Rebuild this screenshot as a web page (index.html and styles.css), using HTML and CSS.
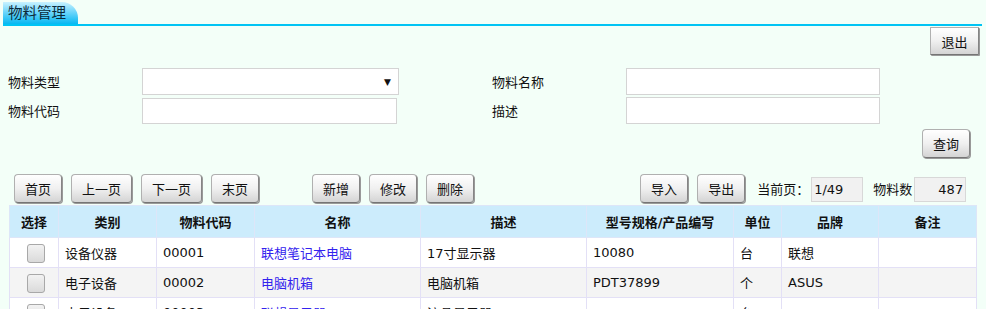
FILE: index.html
```html
<!DOCTYPE html>
<html lang="zh-CN">
<head>
<meta charset="utf-8">
<title>物料管理</title>
<link rel="stylesheet" href="styles.css">
</head>
<body>
<div class="tabbar"><div class="tab">物料管理</div></div>
<div class="topbar"><button class="btn btn-sq">退出</button></div>
<div class="form">
  <label class="lbl">物料类型</label>
  <div class="select w1"><span class="arrow">▼</span></div>
  <label class="lbl lbl2">物料名称</label>
  <input class="txt w2" type="text">
  <label class="lbl">物料代码</label>
  <input class="txt w3" type="text">
  <label class="lbl lbl2">描述</label>
  <input class="txt w2" type="text">
</div>
<div class="qrow"><button class="btn">查询</button></div>
<div class="toolbar">
  <div class="grp">
    <button class="btn">首页</button>
    <button class="btn">上一页</button>
    <button class="btn">下一页</button>
    <button class="btn">末页</button>
  </div>
  <div class="grp g2">
    <button class="btn">新增</button>
    <button class="btn">修改</button>
    <button class="btn">删除</button>
  </div>
  <div class="grp g3">
    <button class="btn">导入</button>
    <button class="btn">导出</button>
    <span class="info">当前页：</span><input class="ro" type="text" value="1/49" readonly>
    <span class="info i2">物料数</span><input class="ro num" type="text" value="487" readonly>
  </div>
</div>
<table class="grid">
  <colgroup>
    <col class="c1"><col class="c2"><col class="c3"><col class="c4"><col class="c5"><col class="c6"><col class="c7"><col class="c8"><col class="c9">
  </colgroup>
  <thead>
    <tr><th>选择</th><th>类别</th><th>物料代码</th><th>名称</th><th>描述</th><th>型号规格/产品编写</th><th>单位</th><th>品牌</th><th>备注</th></tr>
  </thead>
  <tbody>
    <tr><td class="ck"><input type="checkbox" class="cb"></td><td>设备仪器</td><td>00001</td><td><a class="lnk" href="#">联想笔记本电脑</a></td><td>17寸显示器</td><td>10080</td><td>台</td><td>联想</td><td></td></tr>
    <tr class="alt"><td class="ck"><input type="checkbox" class="cb"></td><td>电子设备</td><td>00002</td><td><a class="lnk" href="#">电脑机箱</a></td><td>电脑机箱</td><td>PDT37899</td><td>个</td><td>ASUS</td><td></td></tr>
    <tr><td class="ck"><input type="checkbox" class="cb"></td><td>电子设备</td><td>00003</td><td><a class="lnk" href="#">联想显示器</a></td><td>液晶显示器</td><td></td><td>台</td><td></td><td></td></tr>
  </tbody>
</table>
</body>
</html>
```
FILE: styles.css
```css
html, body {
  margin: 0;
  padding: 0;
  background: #f3fff8;
  font-family: "DejaVu Sans", "Noto Sans CJK SC", sans-serif;
  font-size: 13px;
  color: #111;
  overflow: hidden;
}

.tabbar {
  margin: 0 4px 0 3px;
  padding-top: 2px;
  border-bottom: 2px solid #00c4f4;
  display: flex;
}

.tab {
  width: 70px;
  height: 22px;
  padding-left: 5px;
  line-height: 22px;
  font-size: 14.5px;
  color: #0b2a3a;
  border-top-right-radius: 16px;
  background: linear-gradient(to bottom, #c9f2ff 0%, #6fd6fb 45%, #08b8f2 100%);
}

.topbar {
  display: flex;
  justify-content: flex-end;
  padding: 1px 7px 0 0;
}

.btn {
  font-family: inherit;
  font-size: 13px;
  color: #111;
  height: 29px;
  padding: 0 10px;
  border: 1px solid #b0b0b0;
  border-right-color: #858585;
  border-bottom-color: #757575;
  border-radius: 4px;
  background: linear-gradient(to bottom, #ffffff 0%, #f0f0f0 50%, #d4d4d4 100%);
  box-shadow: 1px 1px 0 #999;
  cursor: pointer;
}

.btn-sq {
  height: 28px;
  width: 49px;
  border-radius: 1px;
}

.form {
  display: grid;
  grid-template-columns: 134px 350px 134px 254px;
  grid-template-rows: 27px 27px;
  row-gap: 2px;
  align-items: center;
  margin-top: 13px;
  padding-left: 8px;
}

.lbl {
  font-size: 13px;
}

.select, .txt {
  box-sizing: border-box;
  height: 27px;
  border: 1px solid #d4d4d4;
  background: #fff;
}

.txt {
  font-family: inherit;
  font-size: 13px;
  padding: 0 4px;
  outline: none;
}

.w1 { width: 257px; }
.w2 { width: 254px; }
.w3 { width: 255px; height: 26px; }

.select {
  display: flex;
  align-items: center;
  justify-content: flex-end;
  padding-right: 7px;
}

.arrow {
  font-size: 9px;
  color: #111;
}

.qrow {
  display: flex;
  justify-content: flex-end;
  padding: 5px 16px 0 0;
}

.toolbar {
  display: flex;
  align-items: center;
  margin-top: 16px;
  padding-left: 14px;
}

.grp {
  display: flex;
  align-items: center;
  gap: 9px;
}

.g2 { margin-left: 53px; }
.g3 { margin-left: 166px; }

.info {
  margin-left: 3px;
  font-size: 13px;
  margin-right: -7px;
}

.i2 { margin-left: 1px; }

.ro {
  box-sizing: border-box;
  width: 52px;
  height: 25px;
  margin-top: 2px;
  border: 1px solid #d8d8d8;
  background: #f1f1f1;
  font-family: inherit;
  font-size: 13px;
  padding: 0 2px;
  color: #111;
  outline: none;
}

.num { text-align: right; }

.grid {
  margin: 2px 0 0 9px;
  width: 967px;
  border-collapse: collapse;
  table-layout: fixed;
}

.c1 { width: 49px; }
.c2 { width: 98px; }
.c3 { width: 98px; }
.c4 { width: 166px; }
.c5 { width: 166px; }
.c6 { width: 147px; }
.c7 { width: 48px; }
.c8 { width: 97px; }
.c9 { width: 98px; }

.grid th {
  height: 32px;
  box-sizing: border-box;
  padding: 0;
  background: #ccecfc;
  border: 1px solid #dde6f8;
  font-weight: bold;
  font-size: 13px;
  color: #111;
  text-align: center;
}

.grid td {
  height: 30px;
  box-sizing: border-box;
  padding: 0 6px;
  border: 1px solid #e3e0f6;
  background: #fff;
  font-size: 13px;
  color: #111;
  white-space: nowrap;
}

.grid tr.alt td {
  background: #f4f4f4;
}

.grid td.ck {
  text-align: center;
  padding: 0;
}

.cb {
  appearance: none;
  -webkit-appearance: none;
  width: 18px;
  height: 19px;
  margin: 2px 0 0 3px;
  vertical-align: middle;
  border: 1px solid #a8a8a8;
  border-radius: 3px;
  background: linear-gradient(to bottom, #f2f2f2, #dadada);
}

.lnk {
  color: #3322ee;
  text-decoration: none;
}
```
